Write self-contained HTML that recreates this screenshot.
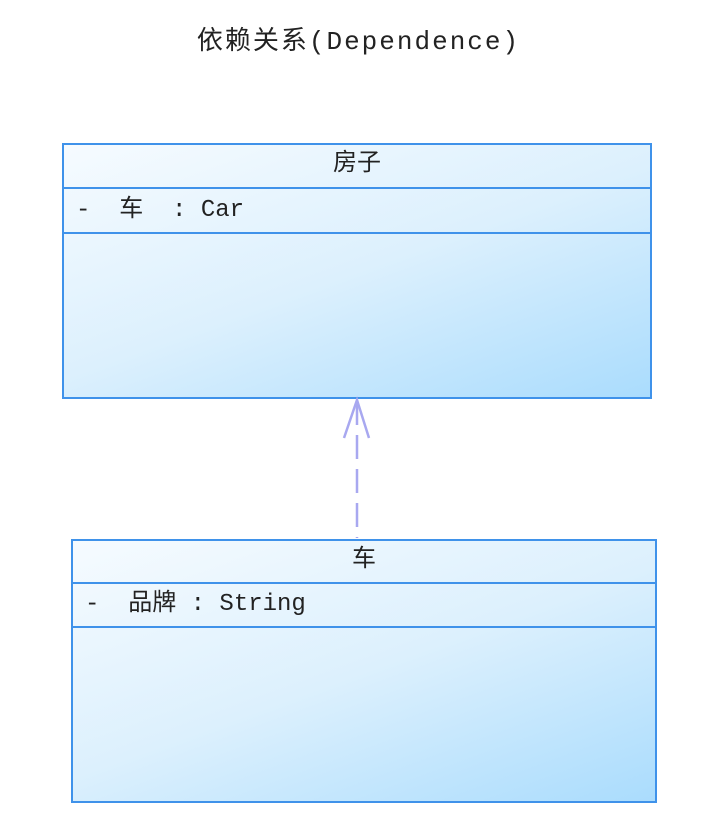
<!DOCTYPE html>
<html><head><meta charset="utf-8"><style>
body{margin:0;width:713px;height:831px;background:#fff;position:relative;overflow:hidden;font-family:"Liberation Mono","Noto Sans CJK SC",monospace;color:#222}
.t{position:absolute;left:0;width:713px;top:20px;text-align:center;font-size:26px;letter-spacing:2px;padding-left:4px;box-sizing:border-box}
.b{position:absolute;border:2px solid #3f92ea;box-sizing:border-box;background:linear-gradient(160deg,#f6fbff 0%,#dcf0fd 50%,#aadcfd 100%)}
.h{position:absolute;left:0;right:0;border-bottom:2px solid #3f92ea;box-sizing:border-box;font-size:24px}
.n{text-align:center}
.a{padding-left:12px}
</style></head><body>
<div class="t">依赖关系(Dependence)</div>
<div class="b" style="left:62px;top:143px;width:590px;height:256px">
 <div class="h n" style="top:0;height:44px;line-height:40px">房子</div>
 <div class="h a" style="top:44px;height:45px;line-height:43px">-&nbsp;&nbsp;车&nbsp;&nbsp;:&nbsp;Car</div>
</div>
<div class="b" style="left:71px;top:539px;width:586px;height:264px">
 <div class="h n" style="top:0;height:43px;line-height:40px">车</div>
 <div class="h a" style="top:43px;height:44px;line-height:42px">-&nbsp;&nbsp;品牌&nbsp;:&nbsp;String</div>
</div>
<svg style="position:absolute;left:0;top:0" width="713" height="831">
 <line x1="357" y1="401" x2="357" y2="538" stroke="#a8a8f0" stroke-width="2.5" stroke-dasharray="24,10"/>
 <polyline points="344,438 357,400 369,438" fill="none" stroke="#a8a8f0" stroke-width="2.5"/>
</svg>
</body></html>
